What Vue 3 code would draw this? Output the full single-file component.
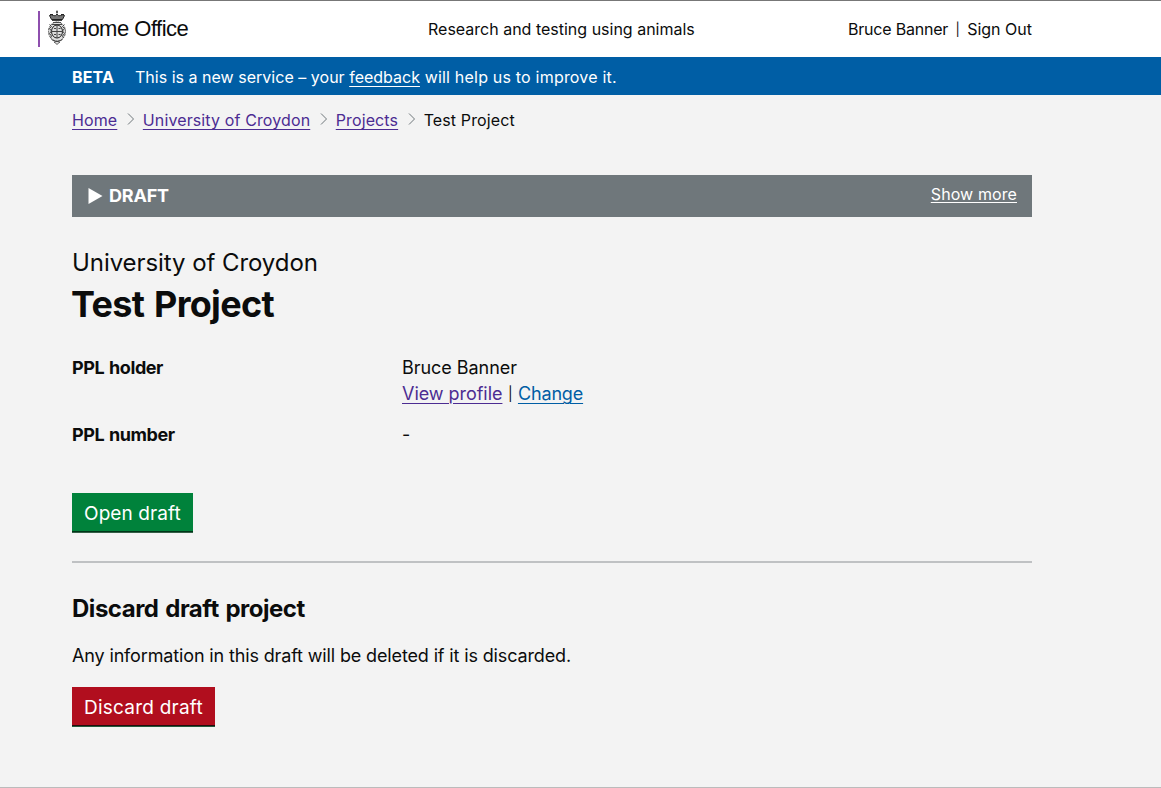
<script setup>
const crumbs = ['Home', 'University of Croydon', 'Projects']
</script>

<template>
  <div class="page">
    <header class="top">
      <div class="brand">
        <span class="bar"></span>
        <svg class="crest" viewBox="0 0 20 36" width="20" height="36" fill="none" stroke="#222" stroke-width="1">
          <ellipse cx="10" cy="21.500" rx="8.500" ry="10" fill="#ddd" stroke="none" />
          <path d="M9 2h2M10 .5v3M3 4.500h3M14 4.500h3" />
          <path d="M2.500 5.500q2-1.500 4 0t3.500-1.500q1.500 3 3.500 1.500t4 0l-2 4h-11z" fill="#777" />
          <path d="M5 10.500h10M6 12.500h8M5 14.500h10" stroke="#444" />
          <ellipse cx="10" cy="21.500" rx="8.500" ry="9.500" stroke="#555" stroke-dasharray="2 .7" />
          <ellipse cx="10" cy="21.500" rx="5.500" ry="6.500" />
          <path d="M10 15v13M5 21.500h10M7 18.500h2M11.500 18.500h2M7 24.500h2M11.500 24.500h2M2.500 14.500l2 2-2 2 2 2.500-2 2.500 2 2.500-1 2M17.500 14.500l-2 2 2 2-2 2.500 2 2.500-2 2.500 1 2M4.500 29.500q5.500 4 11 0M7 32.500q3-2 6 0M8.500 33q1.500 3 3 0" stroke="#444" />
        </svg>
        <span class="office">Home Office</span>
      </div>
      <div class="service">Research and testing using animals</div>
      <div class="user"><span class="name">Bruce Banner</span><span class="pipe">|</span><span>Sign Out</span></div>
    </header>
    <div class="phase">
      <b>BETA</b><span><span class="intro">This is a new service – your </span><a>feedback</a><span class="outro"> will help us to improve it.</span></span>
    </div>
    <main>
      <nav>
        <template v-for="c in crumbs" :key="c">
          <a>{{ c }}</a><svg width="8" height="14" viewBox="0 0 8 14"><path d="M1 1.500l5.500 5.500-5.500 5.500" fill="none" stroke="#6f777b" /></svg>
        </template>
        <span>Test Project</span>
      </nav>
      <div class="status">
        <svg width="16" height="18" viewBox="0 0 16 18"><path d="M1.500 1l14 8-14 8z" fill="#fff" /></svg>
        <b>DRAFT</b><a>Show more</a>
      </div>
      <div class="org">University of Croydon</div>
      <h1>Test Project</h1>
      <dl>
        <dt>PPL holder</dt><dd>Bruce Banner<br /><a class="visited">View profile</a><span class="sep">|</span><a class="link">Change</a></dd>
        <dt>PPL number</dt><dd>-</dd>
      </dl>
      <button class="open">Open draft</button>
      <hr />
      <h2>Discard draft project</h2>
      <p>Any information in this draft will be deleted if it is discarded.</p>
      <button class="discard">Discard draft</button>
    </main>
  </div>
</template>

<style>
body { background: #f3f3f3; }
</style>
<style scoped>
.page { box-sizing: border-box; height: 788px; border-top: 1px solid #777; border-bottom: 1px solid #bbb; font-family: Inter, sans-serif; color: #0b0c0c; background: #f3f3f3; overflow: hidden; }
.top { height: 56px; background: #fff; display: grid; grid-template-columns: 390px 1fr auto; padding: 0 129px 0 38px; font-size: 16px; line-height: 56px; white-space: nowrap; }
.brand { display: flex; align-items: center; }
.bar { width: 2px; height: 36px; background: #8e4fae; margin-right: 7px; }
.crest { margin-right: 5px; position: relative; left: -.5px; top: -1px; }
.office { font: 22px/56px "Liberation Sans", sans-serif; letter-spacing: -.5px; }
.user { display: flex; align-items: center; }
.name { letter-spacing: -.2px; }
.pipe { width: 19px; text-align: center; font-size: 13px; }
.phase { height: 38px; background: #005ea5; color: #fff; padding-left: 72px; font-size: 16px; line-height: 40px; display: flex; gap: 21px; letter-spacing: .11px; }
.intro { letter-spacing: .02px; }
.phase a { letter-spacing: 0; }
.outro { letter-spacing: .2px; }
a { text-decoration: underline; text-decoration-thickness: 1px; text-underline-offset: 3px; }
main { width: 960px; margin-left: 72px; }
nav { display: flex; align-items: center; height: 50px; font-size: 16px; letter-spacing: .12px; }
nav svg { margin: 0 8px 0 9.500px; position: relative; top: -1px; }
nav a, .visited { color: #4c2c92; }
.status { margin-top: 30px; height: 42px; box-sizing: border-box; padding: 0 15px 2px; display: flex; align-items: center; background: #6f777b; color: #fff; font-size: 18px; }
.status svg { position: relative; top: 1px; }
.status b { margin-left: 6px; letter-spacing: -.2px; }
.status a { margin: -2px 0 0 auto; font-size: 16px; letter-spacing: .1px; text-underline-offset: 2px; }
.org { margin-top: 31px; font-size: 24px; line-height: 30px; letter-spacing: -.07px; }
h1 { margin: 5px 0 30px -1px; font-size: 36px; font-weight: 700; line-height: 42px; letter-spacing: -.7px; word-spacing: 2px; }
dl { margin: 0; display: grid; grid-template-columns: 330px 1fr; row-gap: 15px; font-size: 18px; line-height: 26px; }
dt { font-weight: 700; letter-spacing: -.43px; word-spacing: 1px; }
dd { margin: 0; letter-spacing: -.04px; }
.sep { display: inline-block; width: 15.500px; text-align: center; font-size: 14px; line-height: 20px; position: relative; top: -1px; }
.link { color: #005ea5; letter-spacing: -.15px; }
button { display: block; height: 40px; padding: 1px 0 0 12px; border: 0; color: #fff; font: 19px/39px Inter, sans-serif; text-align: left; white-space: nowrap; }
.open { width: 121px; margin-top: 45px; background: #00823b; box-shadow: inset 0 -1px #355f47, inset 0 -2px #003618; letter-spacing: .1px; }
hr { margin: 28px 0 30px; border: 0; height: 2px; background: #bfc1c3; }
h2 { margin: 0; font-size: 24px; font-weight: 700; line-height: 32px; letter-spacing: -.48px; word-spacing: 1.500px; }
p { margin: 18px 0; font-size: 18px; line-height: 26px; letter-spacing: -.14px; }
.discard { width: 143px; background: #b10e1e; box-shadow: inset 0 -1px #235a3b, inset 0 -2px #250c0e; letter-spacing: .23px; }
</style>
